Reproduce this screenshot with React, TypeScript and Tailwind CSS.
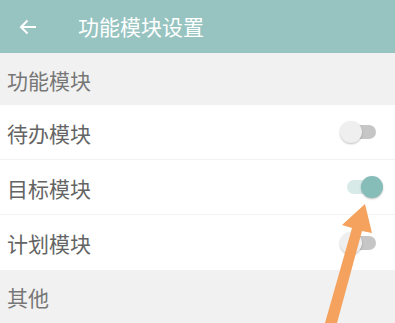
import React from "react";

const ROWS = [
  { label: "待办模块", on: false },
  { label: "目标模块", on: true },
  { label: "计划模块", on: false },
];

function Toggle({ on }: { on: boolean }) {
  return (
    <div className="relative h-[22px] w-[36px]">
      <div
        className={
          on
            ? "absolute left-[7px] top-[4px] h-[14px] w-[26px] rounded-full bg-[#d7eae8]"
            : "absolute left-[10px] top-[4px] h-[14px] w-[26px] rounded-full bg-[#c6c6c6]"
        }
      />
      <div
        className={
          on
            ? "absolute left-[21px] top-0 h-[22px] w-[22px] rounded-full bg-[#86bdb9] shadow-[0_1px_2px_rgba(0,0,0,0.25)]"
            : "absolute left-0 top-0 h-[22px] w-[22px] rounded-full bg-[#efefef] shadow-[0_1px_2px_rgba(0,0,0,0.25)]"
        }
      />
    </div>
  );
}

export default function App() {
  return (
    <div
      className="relative h-[323px] w-[395px] overflow-hidden bg-[#f1f1f1]"
      style={{ fontFamily: '"Noto Sans CJK SC", "Noto Sans", sans-serif' }}
    >
      <div className="flex h-[53px] items-center bg-[#97c4c1] text-white">
        <svg width="18" height="16" viewBox="0 0 18 16" className="ml-[19px]">
          <path d="M17 8H2M8.5 1.5 2 8l6.5 6.5" fill="none" stroke="white" strokeWidth="2" />
        </svg>
        <span className="ml-[41px] text-[21px] leading-none">功能模块设置</span>
      </div>

      <div className="flex h-[52px] items-center px-[7px] pt-[3px] text-[21px] text-[#777]">功能模块</div>

      <div className="bg-white">
        {ROWS.map((row, i) => (
          <div
            key={row.label}
            className={
              "flex h-[55px] items-center justify-between pl-[7px] pr-[19px] " +
              (i < ROWS.length - 1 ? "border-b border-[#f2f2f2]" : "")
            }
          >
            <span className="pt-[3px] text-[21px] text-[#646464]">{row.label}</span>
            <Toggle on={row.on} />
          </div>
        ))}
      </div>

      <div className="flex h-[52px] items-center px-[7px] pt-[3px] text-[21px] text-[#777]">其他</div>

      <svg className="absolute left-0 top-0" width="395" height="323" viewBox="0 0 395 323">
        <polygon
          points="365,204 372,233 362,231 337,323 325,323 352,228 342,225"
          fill="#f4a25e"
        />
      </svg>
    </div>
  );
}
